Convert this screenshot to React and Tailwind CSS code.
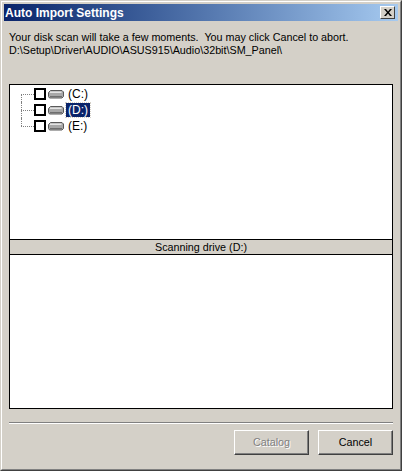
const font = { fontFamily: '"Liberation Sans", Arial, sans-serif' };

const buttonClass =
  'w-[75px] h-[25px] border border-t-white border-l-white border-r-[#404040] border-b-[#404040] shadow-[inset_-1px_-1px_0_#808080] bg-[#d4d0c8] text-[10.75px]';

function DriveIcon() {
  return (
    <svg width="16" height="10" viewBox="0 0 16 10" className="shrink-0">
      <path d="M2.5 1.5 H14 L15.5 3 V7.5 L14 9 H1.5 L0.5 7.5 V3.5 Z" fill="#a8a8a8" stroke="#5a5a5a" />
      <path d="M2 2.5 H13.5 V4 H2 Z" fill="#e4e4e4" />
      <path d="M2 7 H14 V8 H2 Z" fill="#6e6e6e" />
    </svg>
  );
}

function DriveRow({ label, selected, first, last }) {
  return (
    <div className="relative flex items-center h-4 pl-[24px]">
      <div
        className={`absolute left-[11px] w-px border-l border-dotted border-[#808080] ${
          first ? 'top-2 h-2' : last ? 'top-0 h-2' : 'top-0 h-4'
        }`}
      />
      <div className="absolute left-[11px] top-2 w-[13px] border-t border-dotted border-[#808080]" />
      <div className="w-[12px] h-[12px] border-2 border-black bg-white shrink-0" />
      <div className="ml-[2px]">
        <DriveIcon />
      </div>
      <span
        className={`ml-[2px] px-[2px] h-[14px] leading-[14px] text-[12px] ${
          selected ? 'bg-[#0a246a] text-white outline-1 outline-dotted outline-[#d4d0c8]' : 'text-black'
        }`}
      >
        {label}
      </span>
    </div>
  );
}

export default function App() {
  return (
    <div
      className="w-[402px] h-[471px] bg-[#d4d0c8] border-t border-l border-[#d4d0c8] border-r border-b border-r-[#404040] border-b-[#404040] text-black overflow-hidden"
      style={font}
    >
      <div className="h-full border-t border-l border-white border-r border-b border-r-[#808080] border-b-[#808080] p-[2px] flex flex-col">
        <div className="h-[17px] shrink-0 bg-gradient-to-r from-[#0a246a] to-[#a6caf0] flex items-center justify-between pl-[1px] pr-[3px]">
          <span className="text-white font-bold text-[12px] leading-none">Auto Import Settings</span>
          <button className="w-[15px] h-[13px] bg-[#d4d0c8] border border-t-white border-l-white border-r-[#404040] border-b-[#404040] flex items-center justify-center">
            <svg width="8" height="7" viewBox="0 0 8 7">
              <path d="M0 0 L2 0 L4 2.5 L6 0 L8 0 L5 3.5 L8 7 L6 7 L4 4.5 L2 7 L0 7 L3 3.5 Z" fill="#000" />
            </svg>
          </button>
        </div>

        <div className="pl-[5px] pt-[10px] text-[10.75px] leading-[13px] h-[63px] shrink-0">
          <div>Your disk scan will take a few moments.&nbsp; You may click Cancel to abort.</div>
          <div>D:\Setup\Driver\AUDIO\ASUS915\Audio\32bit\SM_Panel\</div>
        </div>

        <div className="ml-[5px] w-[384px] h-[325px] shrink-0 border border-black flex flex-col">
          <div className="h-[154px] bg-white pt-px">
            <DriveRow label="(C:)" first />
            <DriveRow label="(D:)" selected />
            <DriveRow label="(E:)" last />
          </div>
          <div className="h-[16px] bg-[#d4d0c8] border-t border-b border-black flex items-center justify-center text-[10.75px] leading-none">
            Scanning drive (D:)
          </div>
          <div className="flex-1 bg-white" />
        </div>

        <div className="ml-[5px] w-[384px] mt-[13px] h-[2px] shrink-0 border-t border-[#808080] border-b border-b-white" />

        <div className="ml-[5px] w-[384px] mt-[6px] flex justify-end gap-[9px]">
          <button className={`${buttonClass} text-[#808080] [text-shadow:1px_1px_0_#ffffff]`}>Catalog</button>
          <button className={buttonClass}>Cancel</button>
        </div>
      </div>
    </div>
  );
}
